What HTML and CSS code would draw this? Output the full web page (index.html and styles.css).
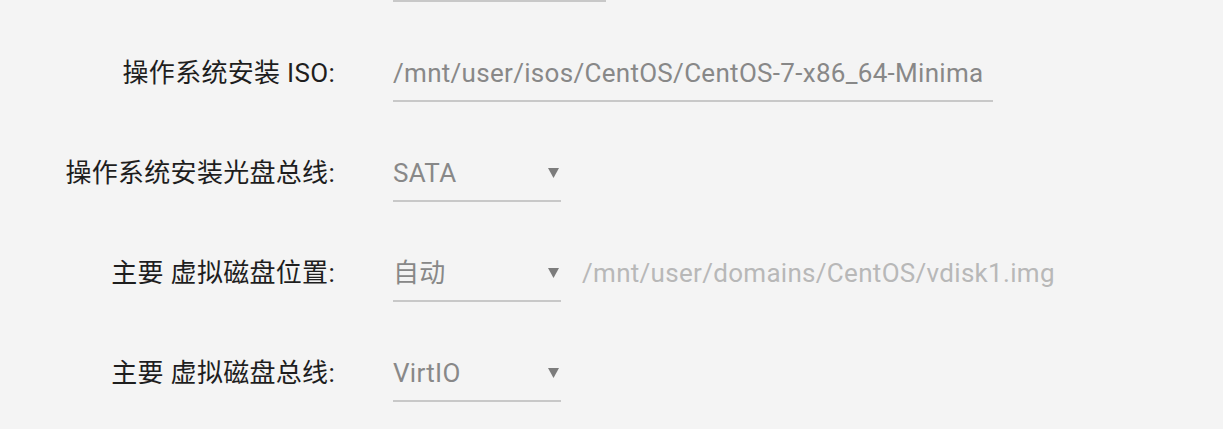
FILE: index.html
```html
<!DOCTYPE html>
<html lang="zh">
<head>
<meta charset="utf-8">
<title>VM Settings</title>
<link rel="stylesheet" href="styles.css">
</head>
<body>
<div class="form">
  <div class="stub-row"><div class="stub"></div></div>

  <div class="row">
    <div class="label">操作系统安装 ISO:</div>
    <div class="controls">
      <div class="field input"><span class="value">/mnt/user/isos/CentOS/CentOS-7-x86_64-Minima</span></div>
    </div>
  </div>

  <div class="row">
    <div class="label">操作系统安装光盘总线:</div>
    <div class="controls">
      <div class="field select"><span class="value">SATA</span>
        <svg class="arrow" viewBox="0 0 11 10" width="11" height="10"><polygon points="0,0 11,0 5.5,10" fill="#7c7c7c"/></svg>
      </div>
    </div>
  </div>

  <div class="row">
    <div class="label">主要 虚拟磁盘位置:</div>
    <div class="controls">
      <div class="field select"><span class="value">自动</span>
        <svg class="arrow" viewBox="0 0 11 10" width="11" height="10"><polygon points="0,0 11,0 5.5,10" fill="#7c7c7c"/></svg>
      </div>
      <span class="path">/mnt/user/domains/CentOS/vdisk1.img</span>
    </div>
  </div>

  <div class="row">
    <div class="label">主要 虚拟磁盘总线:</div>
    <div class="controls">
      <div class="field select"><span class="value">VirtIO</span>
        <svg class="arrow" viewBox="0 0 11 10" width="11" height="10"><polygon points="0,0 11,0 5.5,10" fill="#7c7c7c"/></svg>
      </div>
    </div>
  </div>
</div>
</body>
</html>
```

FILE: styles.css
```css
html, body {
  margin: 0;
  padding: 0;
  background: #f4f4f4;
  overflow: hidden;
}
body {
  font-family: Roboto, "Noto Sans CJK SC", sans-serif;
  font-size: 26px;
  letter-spacing: 0.3px;
  color: #1e1e1e;
}
.form {
  display: flex;
  flex-direction: column;
}
.stub-row {
  height: 2px;
  padding-left: 393px;
}
.stub {
  width: 213px;
  height: 2px;
  background: #c8c8c8;
}
.row {
  height: 100px;
  display: grid;
  grid-template-columns: 335px 1fr;
  column-gap: 58px;
  align-items: end;
}
.label {
  text-align: right;
  line-height: 54px;
  padding-bottom: 2px;
  white-space: nowrap;
}
.controls {
  display: flex;
  align-items: flex-end;
}
.field {
  box-sizing: border-box;
  height: 56px;
  border-bottom: 2px solid #c8c8c8;
  line-height: 54px;
  color: #888888;
  overflow: hidden;
  white-space: nowrap;
}
.input {
  width: 600px;
}
.select {
  width: 168px;
  display: flex;
  align-items: center;
  justify-content: space-between;
  padding-right: 2px;
}
.arrow {
  flex: none;
  margin-top: -1px;
}
.path {
  margin-left: 21px;
  line-height: 54px;
  padding-bottom: 2px;
  color: #b8b8b8;
  white-space: nowrap;
}
```
